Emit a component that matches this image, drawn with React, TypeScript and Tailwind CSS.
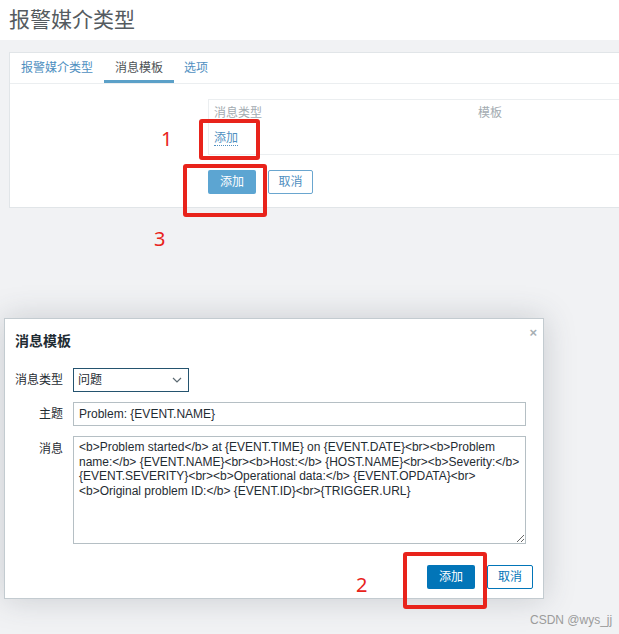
const FONT = "font-['Liberation_Sans','Noto_Sans_CJK_SC',sans-serif]";

const MESSAGE =
  "<b>Problem started</b> at {EVENT.TIME} on {EVENT.DATE}<br><b>Problem\n" +
  "name:</b> {EVENT.NAME}<br><b>Host:</b> {HOST.NAME}<br><b>Severity:</b>\n" +
  "{EVENT.SEVERITY}<br><b>Operational data:</b> {EVENT.OPDATA}<br>\n" +
  "<b>Original problem ID:</b> {EVENT.ID}<br>{TRIGGER.URL}";

function Tabs() {
  return (
    <div className="flex h-[31px] items-stretch border-b border-[#ebeef0] text-[12px]">
      <div className="flex items-center px-[11px] text-[#4f8fbf]">报警媒介类型</div>
      <div className="flex items-center border-b-[3px] border-[#5ba0c8] px-[11px] pt-[3px] text-[#4d5256]">消息模板</div>
      <div className="flex items-center px-[10px] text-[#4f8fbf]">选项</div>
    </div>
  );
}

function TemplateTable() {
  return (
    <div className="ml-[198px] mt-[15px] h-[56px] border border-r-0 border-[#ebeef0] text-[12px]">
      <div className="flex h-[26px] items-center text-[#a3abb1]">
        <div className="w-[269px] pl-[5px]">消息类型</div>
        <div>模板</div>
      </div>
      <div className="pl-[5px] pt-[3px]">
        <span className="border-b border-dotted border-[#4f8fbf] text-[#4f8fbf]">添加</span>
      </div>
    </div>
  );
}

function Mark({ className }: { className: string }) {
  return <div className={`absolute rounded-[3px] border-[4px] border-[#e8231b] ${className}`} />;
}

function Num({ n, className }: { n: string; className: string }) {
  return (
    <div className={`absolute font-['Noto_Sans',sans-serif] text-[20px] leading-none text-[#e8231b] ${className}`}>
      {n}
    </div>
  );
}

function Dialog() {
  return (
    <div className="absolute left-[4px] top-[318px] flex h-[281px] w-[540px] flex-col border border-[#c3cbd0] bg-white px-[10px] shadow-[0_0_30px_rgba(60,70,80,0.22)]">
      <button className="absolute right-[6px] top-[7px] text-[13px] font-bold leading-none text-[#a7afb4]">×</button>
      <div className="mt-[12px] text-[14px] font-bold text-[#1f2c33]">消息模板</div>
      <div className="mt-[16px] flex flex-col gap-[10px] text-[12px] text-[#1f2c33]">
        <div className="flex items-center gap-[10px]">
          <div className="w-[48px] text-right">消息类型</div>
          <div className="flex h-[24px] w-[116px] items-center justify-between border border-[#24536f] pl-[4px] pr-[6px]">
            <span>问题</span>
            <svg width="10" height="6" viewBox="0 0 10 6" fill="none" stroke="#5c6a72" strokeWidth="1.2">
              <path d="M1 1l4 4 4-4" />
            </svg>
          </div>
        </div>
        <div className="flex items-center gap-[10px]">
          <div className="w-[48px] text-right">主题</div>
          <div className="flex h-[24px] w-[453px] items-center border border-[#b5bfc4] px-[5px]">
            Problem: {"{EVENT.NAME}"}
          </div>
        </div>
        <div className="flex items-start gap-[10px]">
          <div className="w-[48px] pt-[4px] text-right">消息</div>
          <textarea
            readOnly
            defaultValue={MESSAGE}
            className={`h-[108px] w-[453px] resize border border-[#b5bfc4] px-[5px] py-[3px] text-[12px] leading-[14.5px] text-[#1f2c33] outline-none ${FONT}`}
          />
        </div>
      </div>
      <div className="mt-[21px] flex justify-end gap-[12px] text-[12px]">
        <button className="h-[24px] w-[48px] rounded-[2px] bg-[#0275b8] text-white">添加</button>
        <button className="h-[24px] w-[46px] rounded-[2px] border border-[#0275b8] bg-white text-[#0275b8]">取消</button>
      </div>
    </div>
  );
}

export default function App() {
  return (
    <div className={`relative h-[634px] w-[619px] overflow-hidden bg-[#f1f2f4] ${FONT}`}>
      <div className="flex h-[40px] items-center bg-white px-[9px]">
        <h1 className="text-[21px] text-[#555b60]">报警媒介类型</h1>
      </div>

      <div className="ml-[9px] mt-[12px] h-[156px] w-[700px] border border-[#e1e5e8] bg-white">
        <Tabs />
        <TemplateTable />
        <div className="ml-[198px] mt-[15px] flex gap-[12px] text-[12px]">
          <button className="h-[24px] w-[48px] rounded-[2px] bg-[#5ca5d2] text-white">添加</button>
          <button className="h-[24px] w-[45px] rounded-[2px] border border-[#6aa6cf] bg-white text-[#4f8fbf]">取消</button>
        </div>
      </div>

      <Mark className="left-[199px] top-[119px] h-[41px] w-[61px]" />
      <Mark className="left-[183px] top-[164px] h-[53px] w-[84px]" />
      <Num n="1" className="left-[161px] top-[129px]" />
      <Num n="3" className="left-[154px] top-[229px]" />

      <Dialog />

      <Mark className="left-[403px] top-[552px] h-[57px] w-[84px]" />
      <Num n="2" className="left-[356px] top-[575px]" />

      <div className="absolute left-[530px] top-[611px] font-['Liberation_Sans',sans-serif] text-[12px] text-[#9b9b9b]">
        CSDN @wys_jj
      </div>
    </div>
  );
}
